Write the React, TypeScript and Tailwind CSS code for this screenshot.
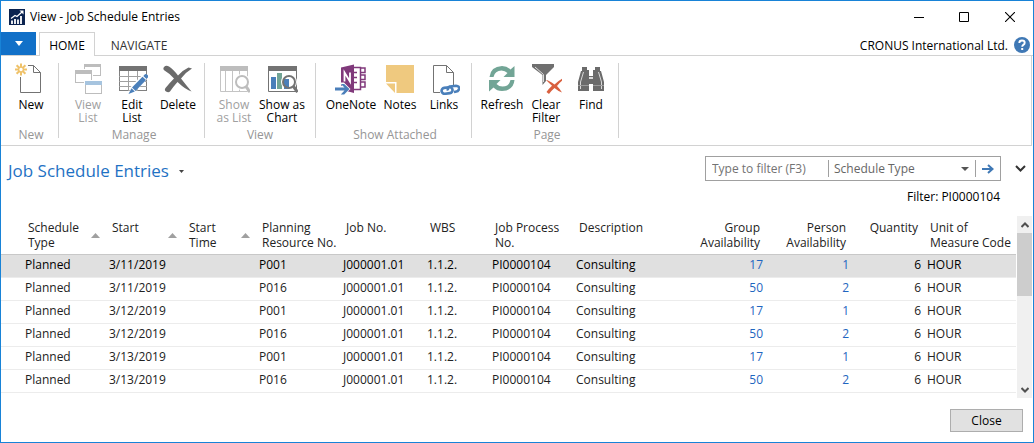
import React, { useState } from "react";

type IconProps = { children: React.ReactNode };

function Icon({ children }: IconProps) {
  return (
    <svg width="32" height="32" viewBox="0 0 32 32" fill="none" aria-hidden="true" className="shrink-0">
      {children}
    </svg>
  );
}

const NewIcon = (
  <Icon>
    <path d="M5.5 14V29.5H25.5V9.5L18.5 2.5H13M18.5 2.5V9.5H25.5" stroke="#737373" />
    <g stroke="#efc26a" strokeWidth="2">
      <path d="M6 0.5V4M6 9V12.5M0 6.5H3.5M8.5 6.5H12M1.6 2.2L4.2 4.8M7.8 8.2L10.4 10.8M10.4 2.2L7.8 4.8M4.2 8.2L1.6 10.8" />
    </g>
    <circle cx="6" cy="6.5" r="2.4" stroke="#efc26a" strokeWidth="1.4" />
  </Icon>
);

const ViewListIcon = (
  <Icon>
    <rect x="12.5" y="1.5" width="16" height="11" fill="#fff" stroke="#bdbdbd" />
    <rect x="12" y="1" width="17" height="3" fill="#bdbdbd" />
    <rect x="2" y="6" width="19" height="16" fill="#fff" />
    <rect x="3.5" y="7.5" width="16" height="12" fill="#fff" stroke="#bdbdbd" />
    <rect x="3" y="7" width="17" height="4" fill="#bdbdbd" />
    <rect x="12" y="17" width="19" height="15" fill="#fff" />
    <rect x="13.5" y="18.5" width="16" height="12" fill="#fff" stroke="#bdbdbd" />
    <rect x="13" y="18" width="17" height="4" fill="#a6c4df" />
  </Icon>
);

const EditListIcon = (
  <Icon>
    <rect x="3.5" y="3.5" width="27" height="24" stroke="#808080" />
    <rect x="3" y="3" width="28" height="5" fill="#737373" />
    <path d="M3 13.5H31M3 18.5H31M3 23.5H31M12.5 8V28M21.5 8V28" stroke="#a0a0a0" />
    <path d="M12 32L15 23.5L28 10L33 14L19.5 28.5Z" fill="#fff" />
    <path d="M12.5 31L15.5 25.2L18.8 28.4Z" fill="#4a7fba" />
    <path d="M16 24.5L26.5 13.8L30 17L19.6 28Z" fill="#4a7fba" />
    <path d="M27.3 13L29 11.3Q30 10.6 31 11.4L32 12.5Q32.6 13.6 31.8 14.6L30.6 16Z" fill="#4a7fba" />
  </Icon>
);

const DeleteIcon = (
  <Icon>
    <path
      d="M2 4Q4 2 7 3.5Q11 6 16 12.5Q21 7 26.5 4.5L30 5.5Q24 9 19 15.5Q24 22 29.5 28.5Q24 27 15.5 19Q11 24 8 28.5Q6.500 30 4 28.500Q2 27 3.500 25Q7.500 20 12 15.500Q7 10 2.500 7.500Q0.500 6 2 4Z"
      fill="#6b6b6b"
    />
  </Icon>
);

const ShowListIcon = (
  <Icon>
    <path d="M2.500 3V28.500H29.500V3M7.500 8V28M14.500 8V28M21.500 8V28" stroke="#c4c4c4" />
    <rect x="2" y="3" width="28" height="5" fill="#bdbdbd" />
    <circle cx="24" cy="19" r="8" fill="#fff" />
    <circle cx="24" cy="19" r="6" fill="#fff" stroke="#bdbdbd" strokeWidth="2" />
    <path d="M28 23.500L32 29" stroke="#bdbdbd" strokeWidth="3" />
  </Icon>
);

const ShowChartIcon = (
  <Icon>
    <path d="M2.500 3V28.500H30.500V3" stroke="#737373" />
    <rect x="2" y="3" width="29" height="5" fill="#737373" />
    <rect x="5" y="14" width="5" height="12" fill="#4a7fba" />
    <rect x="11" y="10" width="5" height="16" fill="#72a596" />
    <circle cx="23" cy="19" r="8" fill="#fff" />
    <path d="M18 16H23V26H18Z" fill="#4a7fba" />
    <circle cx="23" cy="19" r="6" stroke="#737373" strokeWidth="2" />
    <path d="M27.500 23.500L31.500 29" stroke="#737373" strokeWidth="3" />
  </Icon>
);

const OneNoteIcon = (
  <Icon>
    <path d="M17 4.500H25.500V26.500H17M25 5H30V9.500H25M25 12H30V16.500H25M25 19H30V24H25" stroke="#80397b" strokeWidth="1.5" />
    <path d="M17 9.500H22M17 14.500H22M17 19.500H22" stroke="#80397b" strokeWidth="1.500" />
    <path d="M6 4.500L19 1.500V30L6 26.500Z" fill="#80397b" />
    <path d="M9.500 18.500V9.500L15 18.500V9.500" stroke="#fff" strokeWidth="1.800" />
    <path d="M-1 23H7L4.500 19.500H9L15.500 26L9 32H4.500L7 28H-1Z" fill="#fff" />
    <path d="M0 24.500H9.500L5.800 21H9.200L14.500 26L9.200 31.500H5.800L9.500 27.500H0Z" fill="#4a7fba" />
  </Icon>
);

const NotesIcon = (
  <Icon>
    <path d="M2 2H30V30H12.500V19H2Z" fill="#efc97f" />
    <path d="M2 20.500H11V30Z" fill="#efc97f" />
  </Icon>
);

const LinksIcon = (
  <Icon>
    <path d="M12 29.500H5.500V2.500H18.500L25.500 9.500V22M18.500 2.500V9.500H25.500" stroke="#737373" />
    <g stroke="#4a7fba" strokeWidth="2.600">
      <rect x="13.500" y="24.500" width="11" height="6" rx="3" transform="rotate(-8 19 27)" />
      <path d="M20 27.500Q19 24.500 22 23.500L28 22.800Q31.500 23 31 26Q30.500 28.500 27.500 28.800L26 29" />
    </g>
  </Icon>
);

const RefreshIcon = (
  <Icon>
    <g fill="#72a596">
      <path d="M3.500 14Q4.500 3.500 16 3Q21 3 24.500 6.500L28.500 3V14H17.500L21.500 10Q19 7.500 15.500 7.500Q9 7.500 7.500 14Z" />
      <path d="M28.500 17Q27.500 27.500 16 28Q11 28 7.500 24.500L3 28.500V17H14.500L10.500 21Q13 23.500 16.500 23.500Q23 23.500 24.500 17Z" />
    </g>
  </Icon>
);

const ClearFilterIcon = (
  <Icon>
    <path d="M2 1H24V4L16 12V18L12.500 22V12L2 4Z" fill="#6f6f6f" />
    <path d="M5 4L13.500 11.500V19" stroke="#dedede" />
    <path
      d="M16 17Q18.500 17 24.500 21.500Q28 18 32.500 15.500L33 17Q29.500 19.500 27 23Q30 26 32 29.500Q28.500 28.500 24.500 25Q21 28 19 31L16.500 29Q18.500 26 22 22.800Q19 20 16 17Z"
      fill="#d9603f"
    />
  </Icon>
);

const FindIcon = (
  <Icon>
    <g fill="#6b6b6b">
      <path d="M7 4H12V7H14V28H3V19L6 8H7Z" />
      <path d="M20 4H25V8H26L29 19V28H18V7H20Z" />
      <rect x="13" y="13" width="6" height="8" />
    </g>
    <path d="M8.500 9L5.500 19V26M23.500 9L26.500 19V26" stroke="#d9d9d9" />
    <path d="M3 22.500H14M18 22.500H29" stroke="#9a9a9a" />
    <rect x="14" y="14" width="4" height="2" fill="#d9d9d9" />
  </Icon>
);

type Action = { label: string; icon: React.ReactNode; width: string; disabled?: boolean };
type Group = { name: string; pad: string; actions: Action[] };

const groups: Group[] = [
  { name: "New", pad: "pr-[5px]", actions: [{ label: "New", icon: NewIcon, width: "w-11" }] },
  {
    name: "Manage",
    pad: "pr-0.5",
    actions: [
      { label: "View\nList", icon: ViewListIcon, width: "w-11", disabled: true },
      { label: "Edit\nList", icon: EditListIcon, width: "w-11" },
      { label: "Delete", icon: DeleteIcon, width: "w-12" },
    ],
  },
  {
    name: "View",
    pad: "pr-[7px]",
    actions: [
      { label: "Show\nas List", icon: ShowListIcon, width: "w-11", disabled: true },
      { label: "Show as\nChart", icon: ShowChartIcon, width: "w-[52px]" },
    ],
  },
  {
    name: "Show Attached",
    pad: "pr-1",
    actions: [
      { label: "OneNote", icon: OneNoteIcon, width: "w-14" },
      { label: "Notes", icon: NotesIcon, width: "w-[42px]" },
      { label: "Links", icon: LinksIcon, width: "w-[46px]" },
    ],
  },
  {
    name: "Page",
    pad: "pr-[3px]",
    actions: [
      { label: "Refresh", icon: RefreshIcon, width: "w-[46px]" },
      { label: "Clear\nFilter", icon: ClearFilterIcon, width: "w-[42px]" },
      { label: "Find", icon: FindIcon, width: "w-12" },
    ],
  },
];

type Column = { label: string; width: string; right?: boolean; sorted?: boolean };

const columns: Column[] = [
  { label: "Schedule\nType", width: "w-[84px]", sorted: true },
  { label: "Start\n ", width: "w-[77px]", sorted: true },
  { label: "Start\nTime", width: "w-[73px]", sorted: true },
  { label: "Planning\nResource No.", width: "w-[84px]" },
  { label: "Job No.", width: "w-[84px]" },
  { label: "WBS", width: "w-[65px]" },
  { label: "Job Process\nNo.", width: "w-[84px]" },
  { label: "Description", width: "w-auto" },
  { label: "Group\nAvailability", width: "w-[84px]", right: true },
  { label: "Person\nAvailability", width: "w-[86px]", right: true },
  { label: "Quantity", width: "w-[72px]", right: true },
  { label: "Unit of\nMeasure Code", width: "w-[92px]" },
];

const entries = [
  { date: "3/11/2019", resource: "P001", group: 17, person: 1 },
  { date: "3/11/2019", resource: "P016", group: 50, person: 2 },
  { date: "3/12/2019", resource: "P001", group: 17, person: 1 },
  { date: "3/12/2019", resource: "P016", group: 50, person: 2 },
  { date: "3/13/2019", resource: "P001", group: 17, person: 1 },
  { date: "3/13/2019", resource: "P016", group: 50, person: 2 },
];

function TitleBar() {
  return (
    <header className="flex h-[31px] items-center pl-2">
      <svg width="16" height="16" viewBox="0 0 16 16" aria-hidden="true">
        <rect width="16" height="16" fill="#0b2350" />
        <path d="M3 15V11.500M6 15V10M9 15V10.500M12 15V7" fill="none" stroke="#fff" strokeWidth="1.800" />
        <path d="M2 9.500L6 6.500L8 7.500L13 3" fill="none" stroke="#fff" strokeWidth="1.200" />
        <path d="M10.500 1.500H14.500V5.500Z" fill="#fff" />
      </svg>
      <h1 className="ml-[5px] flex-1 text-[12px]">View - Job Schedule Entries</h1>
      <div className="flex pr-px">
        <button type="button" aria-label="Minimize" className="flex h-[29px] w-[42px] items-center justify-center">
          <svg width="10" height="10" viewBox="0 0 10 10"><path d="M0 5.500H10" stroke="#000" /></svg>
        </button>
        <button type="button" aria-label="Maximize" className="flex h-[29px] w-12 items-center justify-center">
          <svg width="10" height="10" viewBox="0 0 10 10"><path d="M.5.5H9.500V9.500H.5Z" fill="none" stroke="#000" /></svg>
        </button>
        <button type="button" aria-label="Close window" className="flex h-[29px] w-11 items-center justify-center">
          <svg width="10" height="10" viewBox="0 0 10 10"><path d="M0 0L10 10M10 0L0 10" stroke="#000" strokeWidth="1.100" /></svg>
        </button>
      </div>
    </header>
  );
}

function TabStrip() {
  return (
    <nav className="flex h-6 border-b border-[#d2d2d2]">
      <button type="button" aria-label="Application menu" className="flex h-[23px] w-[35px] items-center justify-center bg-[#1170c8]">
        <svg width="8" height="5" viewBox="0 0 8 5"><path d="M0 0H8L4 5Z" fill="#fff" /></svg>
      </button>
      <button type="button" className="-mb-px ml-[3px] w-14 border border-b-0 border-[#d2d2d2] bg-white pt-0.5 text-[12px]">HOME</button>
      <button type="button" className="w-[88px] pt-1 text-[12px] text-[#333]">NAVIGATE</button>
      <span className="ml-auto pt-1 text-[12px] leading-5">CRONUS International Ltd.</span>
      <button type="button" aria-label="Help" className="mr-[3px] ml-1.5 flex items-center pt-0.5">
        <svg width="16" height="16" viewBox="0 0 16 16">
          <circle cx="8" cy="8" r="8" fill="#3f78b5" />
          <path d="M5.300 6Q5.300 3.500 8 3.500Q10.700 3.500 10.700 5.700Q10.700 7 9.300 7.900Q8.200 8.600 8.200 9.800" fill="none" stroke="#fff" strokeWidth="1.900" />
          <rect x="7.200" y="11" width="2" height="2" fill="#fff" />
        </svg>
      </button>
    </nav>
  );
}

function Ribbon() {
  return (
    <div className="mr-px flex h-[90px] border-r border-b border-[#d2d2d2] pl-px">
      {groups.map((g) => (
        <section key={g.name} aria-label={g.name} className={"mt-[7px] flex h-[75px] flex-col border-r border-[#d2d2d2] pl-[7px] " + g.pad}>
          <div className="flex flex-1">
            {g.actions.map((a) => (
              <button
                key={a.label}
                type="button"
                disabled={a.disabled}
                className={"flex flex-col items-center text-[12px] leading-[13px] " + a.width + (a.disabled ? " text-[#a0a0a0]" : " text-black")}
              >
                {a.icon}
                <span className="pt-[3px] text-center whitespace-pre">{a.label}</span>
              </button>
            ))}
          </div>
          <h2 className="text-center text-[12px] leading-[6px] text-[#969696]">{g.name}</h2>
        </section>
      ))}
    </div>
  );
}

function PageHead() {
  const [filter, setFilter] = useState("");
  return (
    <div className="flex h-[70px] items-start justify-between pl-[7px]">
      <button type="button" className="flex items-center gap-2.5 pt-[13px] text-[17px] leading-6 text-[#1f72c4]">
        Job Schedule Entries
        <svg width="5" height="3" viewBox="0 0 5 3"><path d="M0 0H5L2.500 3Z" fill="#444" /></svg>
      </button>
      <div className="flex items-start pt-2.5">
        <div className="flex flex-col items-end">
          <div className="flex h-[25px] w-[296px] items-center border border-[#a0a0a0] text-[12px] text-[#666]">
            <input
              aria-label="Type to filter"
              placeholder="Type to filter (F3)"
              value={filter}
              onChange={(e) => setFilter(e.target.value)}
              className="h-full w-[122px] pl-1.5 outline-none placeholder:text-[#737373]"
            />
            <div className="flex h-[17px] flex-1 items-center border-x border-[#a0a0a0] pr-1.5 pl-[5px]">
              <select aria-label="Filter column" className="h-full flex-1 appearance-none leading-[17px] outline-none">
                <option>Schedule Type</option>
              </select>
              <svg width="8" height="4" viewBox="0 0 8 4"><path d="M0 0H8L4 4Z" fill="#555" /></svg>
            </div>
            <button type="button" aria-label="Apply filter" className="flex h-full w-6 items-center justify-center">
              <svg width="12" height="10" viewBox="0 0 12 10"><path d="M0 5H10M6 1L10.500 5L6 9" fill="none" stroke="#3f78b5" strokeWidth="2" /></svg>
            </button>
          </div>
          <p className="pt-1.5 pr-px text-[12px] leading-5">Filter: PI0000104</p>
        </div>
        <button type="button" aria-label="Expand filter pane" className="ml-3.5 flex h-[25px] items-center pr-[7px]">
          <svg width="11" height="7" viewBox="0 0 11 7"><path d="M1 1L5.500 5.500L10 1" fill="none" stroke="#333" strokeWidth="2" /></svg>
        </button>
      </div>
    </div>
  );
}

function EntriesTable() {
  const [selected, setSelected] = useState(0);
  return (
    <table className="w-full table-fixed border-collapse text-[12px]">
      <colgroup>
        <col className="w-[21px]" />
        {columns.map((c) => (
          <col key={c.label} className={c.width} />
        ))}
      </colgroup>
      <thead>
        <tr className="h-[38px] border-b border-[#c8c8c8] align-top">
          <td />
          {columns.map((c) => (
            <th key={c.label} scope="col" className={"px-1.5 pt-1 font-normal leading-[15px] text-[#222] " + (c.right ? "text-right" : "text-left")}>
              <div className={c.sorted ? "flex items-center justify-between" : ""}>
                <div className="whitespace-pre">{c.label}</div>
                {c.sorted ? (
                  <svg width="9" height="5" viewBox="0 0 9 5"><path d="M0 5H9L4.500 0Z" fill="#a0a0a0" /></svg>
                ) : null}
              </div>
            </th>
          ))}
        </tr>
      </thead>
      <tbody>
        {entries.map((e, i) => (
          <tr
            key={i}
            onClick={() => setSelected(i)}
            className={"h-[23px] border-b border-[#ececec] leading-[18px] [&>td]:px-[3px] [&>td]:pb-0.5 " + (selected === i ? "bg-[#e0e0e0] text-black" : "text-[#222]")}
          >
            <td />
            <td>Planned</td>
            <td>{e.date}</td>
            <td />
            <td>{e.resource}</td>
            <td>J000001.01</td>
            <td>1.1.2.</td>
            <td>PI0000104</td>
            <td>Consulting</td>
            <td className="text-right"><a href="#group" className="text-[#1f66c0]">{e.group}</a></td>
            <td className="text-right"><a href="#person" className="text-[#1f66c0]">{e.person}</a></td>
            <td className="text-right">6</td>
            <td>HOUR</td>
          </tr>
        ))}
      </tbody>
    </table>
  );
}

function ScrollBar() {
  return (
    <div className="mr-px ml-px flex w-[15px] shrink-0 flex-col bg-[#f0f0f0]">
      <button type="button" aria-label="Scroll up" className="flex h-[17px] items-center justify-center">
        <svg width="8" height="6" viewBox="0 0 8 6"><path d="M.5 5L4 1.500L7.500 5" fill="none" stroke="#505050" strokeWidth="2" /></svg>
      </button>
      <div className="flex-1">
        <div className="h-[63px] bg-[#cdcdcd]" />
      </div>
      <button type="button" aria-label="Scroll down" className="flex h-[17px] items-center justify-center">
        <svg width="8" height="6" viewBox="0 0 8 6"><path d="M.5 1L4 4.500L7.500 1" fill="none" stroke="#505050" strokeWidth="2" /></svg>
      </button>
    </div>
  );
}

export default function App() {
  return (
    <div className="flex min-h-screen flex-col border border-[#1883d7] bg-white font-['Open_Sans','Noto_Sans',sans-serif] text-black">
      <TitleBar />
      <TabStrip />
      <Ribbon />
      <PageHead />
      <main className="flex flex-1">
        <div className="min-w-0 flex-1">
          <EntriesTable />
        </div>
        <ScrollBar />
      </main>
      <footer className="flex justify-end pt-[11px] pr-2.5 pb-2.5">
        <button type="button" className="h-[23px] w-[73px] border border-[#adadad] bg-[#e1e1e1] text-[12px] leading-5">Close</button>
      </footer>
    </div>
  );
}
